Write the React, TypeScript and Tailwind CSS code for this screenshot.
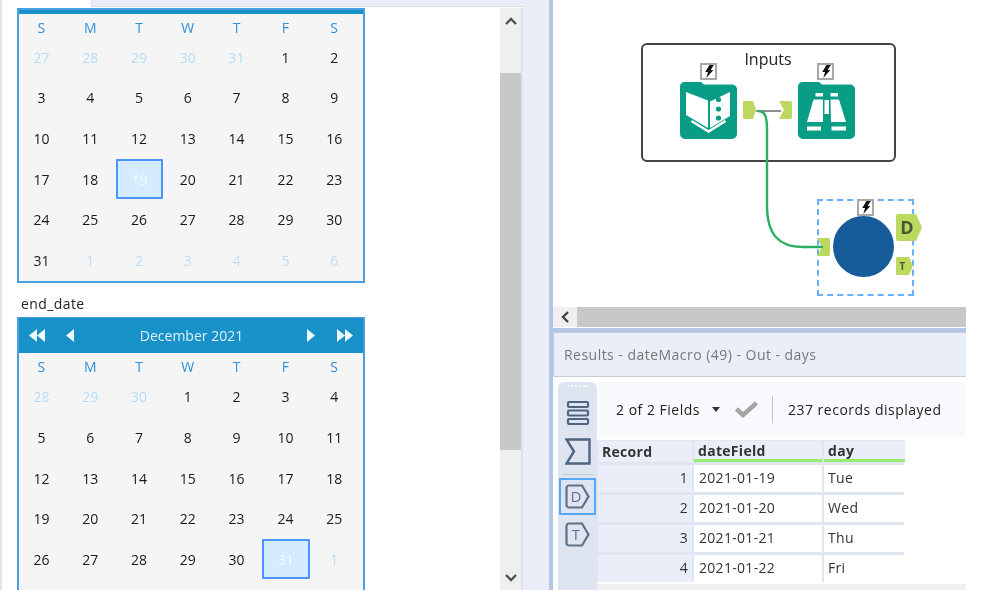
const weekdays = ['S', 'M', 'T', 'W', 'T', 'F', 'S'];

type Day = { n: number; muted?: boolean; selected?: boolean };

function buildDays(lead: number[], count: number, trail: number[], selected: number): Day[] {
  return [
    ...lead.map((n) => ({ n, muted: true })),
    ...Array.from({ length: count }, (_, i) => ({ n: i + 1, selected: i + 1 === selected })),
    ...trail.map((n) => ({ n, muted: true })),
  ];
}

const startDays = buildDays([27, 28, 29, 30, 31], 31, [1, 2, 3, 4, 5, 6], 19);
const endDays = buildDays([28, 29, 30], 31, [1], 31);

function Triangle({ dir }: { dir: 'left' | 'right' }) {
  return (
    <svg width="8" height="13" viewBox="0 0 8 13" className="fill-[#eef7fc]">
      <path d={dir === 'left' ? 'M8 0V13L0 6.5Z' : 'M0 0V13L8 6.5Z'} />
    </svg>
  );
}

function Calendar({ days, title }: { days: Day[]; title?: string }) {
  return (
    <div className="w-[348px] border-2 border-[#4a9fe0] bg-[#f5f5f5]">
      {title ? (
        <div className="h-[35px] -mt-[1px] bg-[#1890c8] flex items-center pl-[10px] pr-[10px] text-[#dff1fb]">
          <div className="flex"><Triangle dir="left" /><Triangle dir="left" /></div>
          <div className="ml-[21px]"><Triangle dir="left" /></div>
          <div className="flex-1 text-center text-[14px] pl-[2px]">{title}</div>
          <div className="mr-[22px]"><Triangle dir="right" /></div>
          <div className="flex"><Triangle dir="right" /><Triangle dir="right" /></div>
        </div>
      ) : (
        <div className="h-[4px] bg-[#1890c8]" />
      )}
      <div className="grid grid-cols-[repeat(7,48.8px)] -ml-[2px]">
        {weekdays.map((d, i) => (
          <div key={i} className={`${title ? 'h-[24px]' : 'h-[23px]'} pt-[3px] flex items-center justify-center text-[14px] text-[#3090d8]`}>{d}</div>
        ))}
        {days.map((d, i) => (
          <div key={i} className="h-[40.6px] flex items-center justify-center text-[14px]">
            {d.selected ? (
              <div className="w-[48px] h-[40px] ml-[1px] border-2 border-[#4a94ff] bg-[#d5ecff] text-[#f4faff] flex items-center justify-center rounded-[1px]">{d.n}</div>
            ) : (
              <span className={d.muted ? 'text-[#b8dcf5]' : 'text-[#1a1a1a]'}>{d.n}</span>
            )}
          </div>
        ))}
      </div>
      {title && <div className="h-[20px]" />}
    </div>
  );
}

function ScrollArrow({ up }: { up?: boolean }) {
  return (
    <svg width="12" height="8" viewBox="0 0 12 8" fill="none" stroke="#505050" strokeWidth="2.4">
      <path d={up ? 'M1 7L6 2L11 7' : 'M1 1L6 6L11 1'} />
    </svg>
  );
}

function Flash({ className }: { className: string }) {
  return (
    <div className={`absolute w-[17px] h-[17px] bg-white border-2 border-[#a8a8a8] flex items-center justify-center ${className}`}>
      <svg width="10" height="13" viewBox="0 0 9 12" fill="#111">
        <path d="M5 0H9L6 4.5H8.5L2 12L3.6 6.5H1Z" />
      </svg>
    </div>
  );
}

const folderPath = 'M5 1H22L25 3.5H53A5 5 0 0 1 58 8.5V53A5 5 0 0 1 53 58H6A5 5 0 0 1 1 53V6A5 5 0 0 1 5 1Z';

function BookIcon() {
  return (
    <svg width="59" height="59" viewBox="0 0 59 59">
      <path d={folderPath} fill="#0a9d86" />
      <path d="M7 11L29 19.5V47L7 34Z" fill="#fff" />
      <path d="M31 20.5L51 11V35L31 47Z" fill="#fff" />
      <path d="M12.5 40L29.5 50.5L46.5 40" fill="none" stroke="#fff" strokeWidth="2.6" />
      <circle cx="39.5" cy="18.5" r="2.6" fill="#0a9d86" />
      <circle cx="39.5" cy="28" r="2.6" fill="#0a9d86" />
      <circle cx="39.5" cy="37" r="2.6" fill="#0a9d86" />
    </svg>
  );
}

function BinocularIcon() {
  return (
    <svg width="59" height="59" viewBox="0 0 59 59">
      <path d={folderPath} fill="#0a9d86" />
      <rect x="18.5" y="12" width="7.5" height="3.5" fill="#fff" />
      <rect x="33.5" y="12" width="7.5" height="3.5" fill="#fff" />
      <path d="M16.5 18.5H26V41H10Z" fill="#fff" />
      <path d="M33.5 18.5H42L49 41H34Z" fill="#fff" />
      <rect x="27.5" y="19" width="4.5" height="14" fill="#fff" />
      <rect x="10" y="45.5" width="14" height="4" fill="#fff" />
      <rect x="34.5" y="45.5" width="14.5" height="4" fill="#fff" />
    </svg>
  );
}

function OutAnchor({ className, letter, size }: { className: string; letter?: string; size: string }) {
  return (
    <div className={`absolute ${className} flex items-center justify-center font-bold text-[#4a5535]`}>
      <svg className="absolute inset-0" width="100%" height="100%" viewBox="0 0 26 26" preserveAspectRatio="none">
        <path d="M2 0H20L26 13L20 26H2A2 2 0 0 1 0 24V2A2 2 0 0 1 2 0Z" fill="#bcd85f" />
      </svg>
      {letter && <span className={`relative -ml-[4px] ${size}`}>{letter}</span>}
    </div>
  );
}

function InAnchor({ className }: { className: string }) {
  return (
    <svg className={`absolute ${className}`} width="13" height="18" viewBox="0 0 13 18">
      <path d="M0 0H11A2 2 0 0 1 13 2V16A2 2 0 0 1 11 18H0L5 9Z" fill="#bcd85f" />
    </svg>
  );
}

function Canvas() {
  return (
    <div className="relative h-[307px] bg-white overflow-hidden">
      <div className="absolute left-[88px] top-[43px] w-[255px] h-[119px] border-2 border-[#444] rounded-[6px] bg-white pr-px text-center text-[16px] leading-[28px] text-[#222]">
        Inputs
      </div>
      <div className="absolute left-[126px] top-[81px]"><BookIcon /></div>
      <div className="absolute left-[244px] top-[81px]"><BinocularIcon /></div>
      <Flash className="left-[147px] top-[63px]" />
      <Flash className="left-[264px] top-[63px]" />
      <OutAnchor className="left-[190px] top-[101px] w-[13px] h-[18px]" size="" />
      <InAnchor className="left-[226px] top-[101px]" />
      <div className="absolute left-[264px] top-[199px] w-[97px] h-[97px] border-2 border-dashed border-[#66b0ff]" />
      <div className="absolute left-[280px] top-[216px] w-[61px] h-[61px] rounded-full bg-[#165c9a]" />
      <Flash className="left-[304px] top-[199px]" />
      <InAnchor className="left-[264px] top-[238px]" />
      <svg className="absolute left-0 top-0" width="413" height="307" fill="none">
        <path d="M203 111H228" stroke="#6a6a6a" strokeWidth="1.5" />
        <path d="M205 111C212 111 214 116 214 130V205C214 235 226 247 250 247H270" stroke="#2bae62" strokeWidth="2.4" />
      </svg>
      <OutAnchor className="left-[343px] top-[214px] w-[26px] h-[27px]" letter="D" size="text-[18px]" />
      <OutAnchor className="left-[343px] top-[257px] w-[17px] h-[18px]" letter="T" size="text-[10px]" />
    </div>
  );
}

function RowsIcon() {
  return (
    <svg width="24" height="26" viewBox="0 0 24 26" fill="#dfe5f0" stroke="#4e6480" strokeWidth="2.2">
      <rect x="2" y="2" width="20" height="5" rx="1" />
      <rect x="2" y="10.5" width="20" height="5" rx="1" />
      <rect x="2" y="19" width="20" height="5" rx="1" />
    </svg>
  );
}

function SigmaIcon() {
  return (
    <svg width="26" height="27" viewBox="0 0 26 27" fill="none" stroke="#4e6480" strokeWidth="2.4">
      <path d="M1.5 1.5H24.5V25.5H1.5L9 13.5Z" />
    </svg>
  );
}

function TagIcon({ letter }: { letter: string }) {
  return (
    <div className="relative w-[25px] h-[25px] flex items-center justify-center text-[15px] text-[#5d7188]">
      <svg className="absolute inset-0" width="25" height="25" viewBox="0 0 25 25" fill="none" stroke="#5d7188" strokeWidth="2.2">
        <path d="M4 1.5H17L23.5 12.5L17 23.5H4A2.5 2.5 0 0 1 1.5 21V4A2.5 2.5 0 0 1 4 1.5Z" />
      </svg>
      <span className="relative -ml-[3px]">{letter}</span>
    </div>
  );
}

const rows = [
  { id: 1, date: '2021-01-19', day: 'Tue' },
  { id: 2, date: '2021-01-20', day: 'Wed' },
  { id: 3, date: '2021-01-21', day: 'Thu' },
  { id: 4, date: '2021-01-22', day: 'Fri' },
];

function Results() {
  return (
    <div className="flex-1 flex min-h-0">
      <div className="w-[39px] ml-[5px] mt-[5px] bg-[#dfe5f0] rounded-t-[6px] flex flex-col items-center">
        <div className="mt-[3px] h-[2px] w-[20px] border-t-2 border-dotted border-[#f5f7fb]" />
        <div className="mt-[13px]"><RowsIcon /></div>
        <div className="mt-[12px]"><SigmaIcon /></div>
        <div className="mt-[9px] w-[32px] border-t border-[#c4c8cf]" />
        <div className="mt-[3px] w-[37px] h-[37px] border-2 border-[#55a8f5] flex items-center justify-center"><TagIcon letter="D" /></div>
        <div className="mt-[7px]"><TagIcon letter="T" /></div>
      </div>
      <div className="flex-1 flex flex-col bg-[#f7f9fd] mt-[5px]">
        <div className="h-[55px] flex items-center pl-[19px] text-[14px] text-[#222] tracking-[0.5px]">
          <span>2 of 2 Fields</span>
          <svg className="ml-[12px]" width="8" height="5" viewBox="0 0 8 5" fill="#333"><path d="M0 0H8L4 5Z" /></svg>
          <svg className="ml-[15px]" width="23" height="17" viewBox="0 0 23 17" fill="none" stroke="#a3a3a3" strokeWidth="4.5"><path d="M1.5 8L8 14L21.5 2" /></svg>
          <div className="ml-[14px] w-px h-[27px] bg-[#c4c4c4]" />
          <span className="ml-[15px]">237 records displayed</span>
        </div>
        <div className="bg-white flex-1 flex flex-col">
          <div className="flex-1 pt-[3px]">
            <div className="w-[307px] bg-[#dfe6f2] pl-px pt-px grid grid-cols-[94px_128px_81px] gap-x-[2px] gap-y-[3px] text-[14px] text-[#333] tracking-[0.3px]">
              <div className="h-[21px] flex items-center pl-[4px] font-bold bg-[#e9eef8]">Record</div>
              <div className="h-[21px] flex items-center pl-[4px] font-bold bg-[#e9eef8] border-b-[3px] border-[#96ec6e]">dateField</div>
              <div className="h-[21px] flex items-center pl-[4px] font-bold bg-[#e9eef8] border-b-[3px] border-[#96ec6e]">day</div>
              {rows.map((r) => (
                <div key={r.id} className="contents">
                  <div className="h-[27px] pb-[2px] flex items-center justify-end pr-[4px] bg-[#e9eef8]">{r.id}</div>
                  <div className="h-[27px] pb-[2px] flex items-center pl-[5px] bg-white">{r.date}</div>
                  <div className="h-[27px] pb-[2px] flex items-center pl-[4px] bg-white">{r.day}</div>
                </div>
              ))}
            </div>
          </div>
          <div className="h-[6px] bg-[#f0f0f0]" />
        </div>
      </div>
    </div>
  );
}

export default function App() {
  return (
    <div className="w-[999px] h-[602px] bg-white overflow-hidden font-['Open_Sans',sans-serif] blur-[0.5px]">
      <div className="h-[590px] flex">
        <div className="w-[2px] bg-[#e3e3ec]" />
        <div className="w-[521px] flex flex-col">
          <div className="h-[8px] flex shrink-0">
            <div className="w-[89px]" />
            <div className="flex-1 h-[7px] bg-[#e9eef8] border-l border-b border-[#dcdfe6]" />
          </div>
          <div className="flex-1 flex min-h-0 border-r-2 border-[#dfe2e8]">
            <div className="w-[498px] pl-[15px] overflow-hidden">
              <Calendar days={startDays} />
              <div className="h-[34px] pt-[10px] pl-[4px] text-[14px] text-[#222] tracking-[0.4px]">end_date</div>
              <Calendar days={endDays} title="December 2021" />
            </div>
            <div className="w-[21px] bg-[#efefef] flex flex-col">
              <div className="h-[65px] flex justify-center pt-[9px]"><ScrollArrow up /></div>
              <div className="h-[377px] bg-[#c8c8c8]" />
              <div className="flex-1 flex justify-center items-end pb-[8px]"><ScrollArrow /></div>
            </div>
          </div>
        </div>
        <div className="w-[26px] bg-[#e9eef8]" />
        <div className="w-[4px] bg-[#b4c6e6]" />
        <div className="w-[413px] flex flex-col">
          <Canvas />
          <div className="h-[20px] flex shrink-0">
            <div className="w-[24px] bg-[#efefef] flex items-center justify-center">
              <svg width="8" height="12" viewBox="0 0 8 12" fill="none" stroke="#444" strokeWidth="2.4"><path d="M7 1L2 6L7 11" /></svg>
            </div>
            <div className="flex-1 bg-[#c8c8c8]" />
          </div>
          <div className="h-[4px] mt-[1px] bg-[#b4c6e6] shrink-0" />
          <div className="h-[45px] shrink-0 bg-[#e9eef8] border border-[#c8cbd0] border-r-0 flex items-center pl-[10px] text-[14px] text-[#777] tracking-[0.47px]">
            Results - dateMacro (49) - Out - days
          </div>
          <Results />
        </div>
      </div>
    </div>
  );
}
